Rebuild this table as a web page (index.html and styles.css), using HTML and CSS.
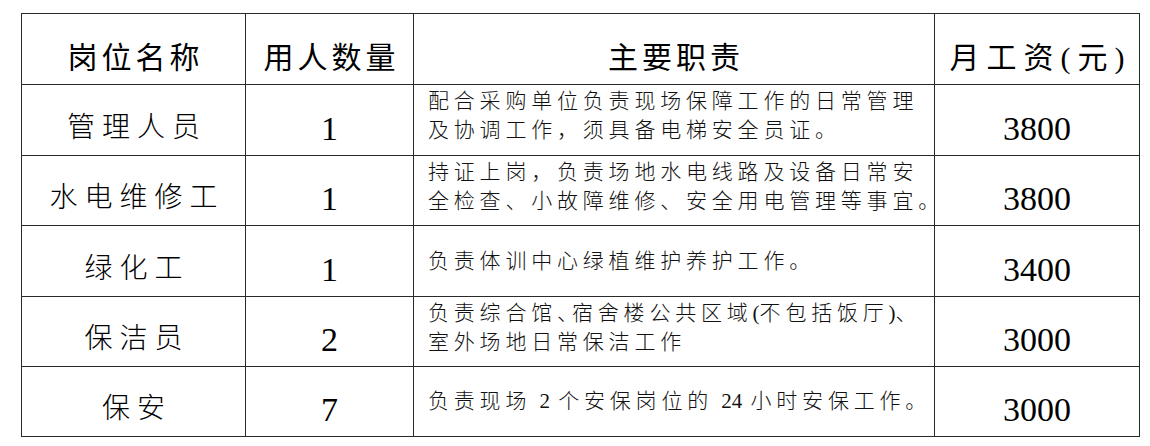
FILE: index.html
```html
<!DOCTYPE html>
<html lang="zh">
<head>
<meta charset="utf-8">
<title>岗位</title>
<link rel="stylesheet" href="styles.css">
</head>
<body>
<table class="jobs">
  <colgroup>
    <col class="c-name">
    <col class="c-count">
    <col class="c-duty">
    <col class="c-pay">
  </colgroup>
  <tr class="head">
    <th class="h">岗位名称</th>
    <th class="h">用人数量</th>
    <th class="h">主要职责</th>
    <th class="h h-pay">月工资(元)</th>
  </tr>
  <tr class="r1">
    <td class="name">管理人员</td>
    <td class="num">1</td>
    <td class="duty two">配合采购单位负责现场保障工作的日常管理<br>及协调工作，须具备电梯安全员证。</td>
    <td class="num">3800</td>
  </tr>
  <tr class="r2">
    <td class="name">水电维修工</td>
    <td class="num">1</td>
    <td class="duty two">持证上岗，负责场地水电线路及设备日常安<br>全检查、小故障维修、安全用电管理等事宜<span class="end">。</span></td>
    <td class="num">3800</td>
  </tr>
  <tr class="r3">
    <td class="name">绿化工</td>
    <td class="num">1</td>
    <td class="duty">负责体训中心绿植维护养护工作。</td>
    <td class="num">3400</td>
  </tr>
  <tr class="r4">
    <td class="name">保洁员</td>
    <td class="num">2</td>
    <td class="duty two">负责综合馆<span class="tight">、</span>宿舍楼公共区域<span class="lat">(</span>不包括饭厅<span class="lat">)</span>、<br>室外场地日常保洁工作</td>
    <td class="num">3000</td>
  </tr>
  <tr class="r5">
    <td class="name">保安</td>
    <td class="num">7</td>
    <td class="duty">负责现场<span class="lat"> 2 </span>个安保岗位的<span class="lat"> 24 </span>小时安保工作。</td>
    <td class="num">3000</td>
  </tr>
</table>
</body>
</html>
```

FILE: styles.css
```css
html, body {
  margin: 0;
  padding: 0;
  background: #ffffff;
}
body {
  font-family: "Liberation Serif", "Noto Sans CJK SC", serif;
  color: #000;
}
.jobs {
  margin: 13px 0 0 21px;
  border-collapse: collapse;
  table-layout: fixed;
  width: 1118px;
}
.c-name { width: 224px; }
.c-count { width: 168px; }
.c-duty { width: 521px; }
.c-pay { width: 205px; }

.jobs .h,
.jobs .name,
.jobs .num,
.jobs .duty {
  border: 1px solid #2a2a2a;
  vertical-align: middle;
  text-align: center;
  white-space: nowrap;
}
.head { height: 71px; }
.r1 { height: 71px; }
.r2 { height: 70px; }
.r3 { height: 71px; }
.r4 { height: 70px; }
.r5 { height: 70px; }

.jobs .h {
  font-weight: 400;
  font-size: 30px;
  letter-spacing: 4px;
  padding: 17px 0 0 4px;
  line-height: 36px;
}
.jobs .h-pay {
  letter-spacing: 7px;
  padding-left: 7px;
}
.jobs .name {
  font-size: 28px;
  font-weight: 300;
  letter-spacing: 7px;
  padding: 15px 0 0 7px;
  line-height: 34px;
}
.jobs .num {
  font-size: 34px;
  font-weight: 400;
  padding: 17px 0 0 0;
  line-height: 36px;
}
.jobs .duty {
  text-align: left;
  font-size: 21px;
  font-weight: 300;
  letter-spacing: 4.8px;
  line-height: 29px;
  padding: 0 0 0 14px;
  color: #111;
}
.jobs .duty.two {
  padding-bottom: 8px;
}
.tight {
  letter-spacing: -6px;
}
.lat {
  letter-spacing: 0;
  word-spacing: 3px;
}
.end {
  letter-spacing: 0;
  margin-right: -12px;
}
```
